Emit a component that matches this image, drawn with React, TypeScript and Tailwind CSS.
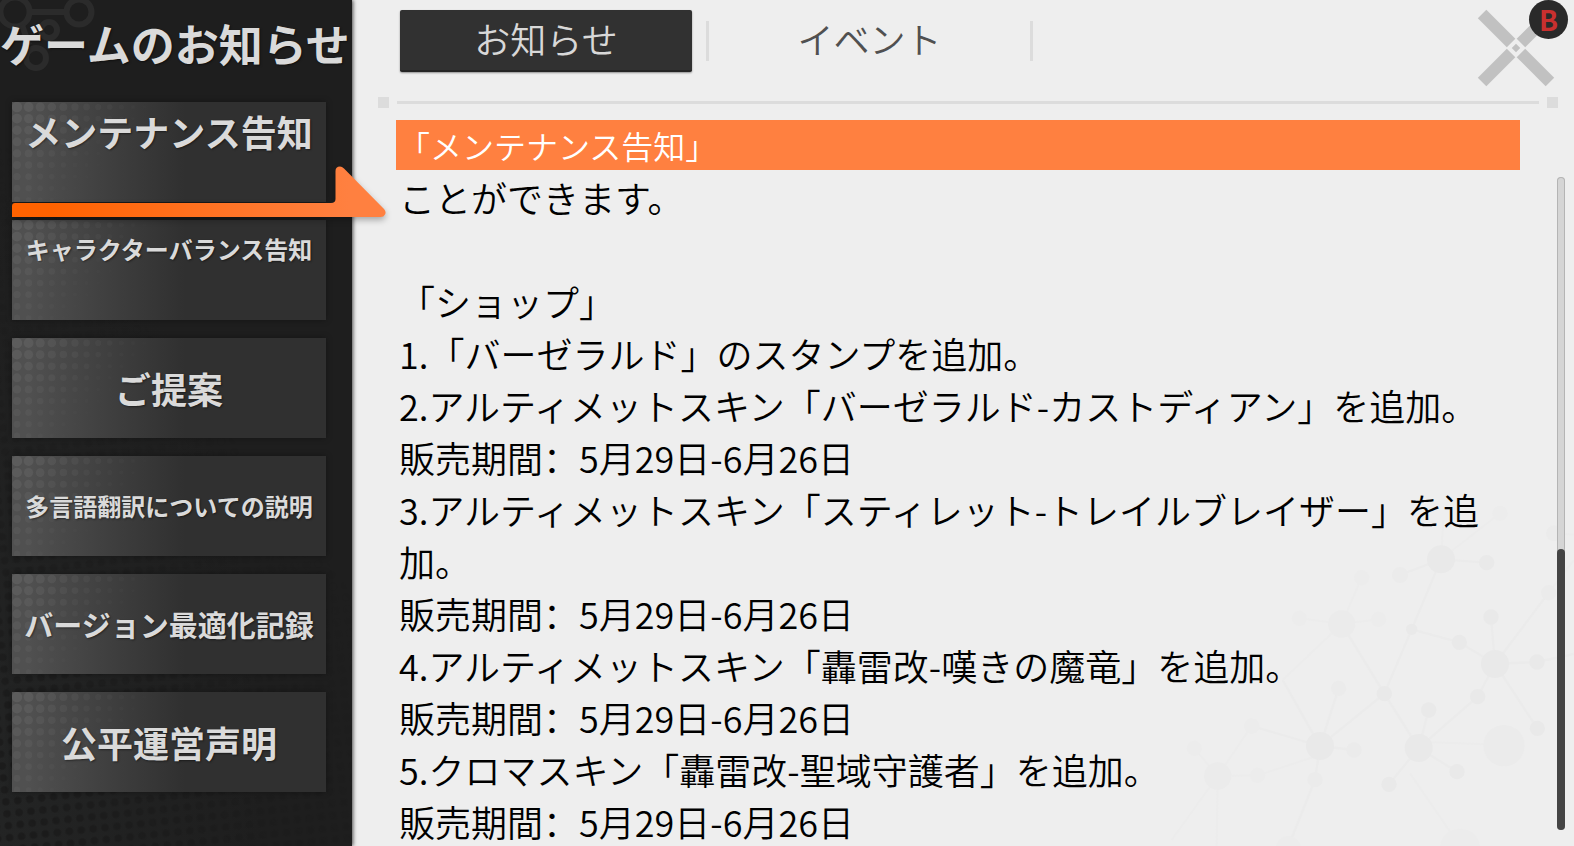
import React from "react";

type MenuItem = { label: string; size: string; raised?: boolean; active?: boolean };

const MENU: MenuItem[] = [
  { label: "メンテナンス告知", size: "text-[36px]", raised: true, active: true },
  { label: "キャラクターバランス告知", size: "text-[24px]", raised: true },
  { label: "ご提案", size: "text-[36px]" },
  { label: "多言語翻訳についての説明", size: "text-[24px]" },
  { label: "バージョン最適化記録", size: "text-[29px]" },
  { label: "公平運営声明", size: "text-[36px]" },
];

const LINES = [
  "ことができます。",
  "",
  "「ショップ」",
  "1.「バーゼラルド」のスタンプを追加。",
  "2.アルティメットスキン「バーゼラルド-カストディアン」を追加。",
  "販売期間：5月29日-6月26日",
  "3.アルティメットスキン「スティレット-トレイルブレイザー」を追加。",
  "販売期間：5月29日-6月26日",
  "4.アルティメットスキン「轟雷改-嘆きの魔竜」を追加。",
  "販売期間：5月29日-6月26日",
  "5.クロマスキン「轟雷改-聖域守護者」を追加。",
  "販売期間：5月29日-6月26日",
];

function ButtonDots() {
  const dots: React.ReactNode[] = [];
  for (let row = 0; row < 9; row++) {
    for (let col = 0; col < 12; col++) {
      const r = 5.2 - col * 0.3 - row * 0.25;
      const opacity = 0.07 - col * 0.0055 - row * 0.005;
      if (r > 0.6 && opacity > 0) {
        dots.push(
          <circle key={`${row}-${col}`} cx={5 + col * 11.6} cy={5 + row * 11.6} r={r} fill="#fff" opacity={opacity} />,
        );
      }
    }
  }
  return (
    <svg className="absolute left-0 top-0 h-full w-[140px]" viewBox="0 0 140 100" aria-hidden="true">
      {dots}
    </svg>
  );
}

function ActiveArrow() {
  return (
    <svg
      className="pointer-events-none absolute left-0 top-[62px] z-20 h-[60px] w-[380px] drop-shadow-[0_3px_3px_rgba(0,0,0,0.3)]"
      viewBox="0 0 380 60"
      aria-hidden="true"
    >
      <defs>
        <linearGradient id="arrow" x1="0" x2="1" y1="0" y2="0">
          <stop offset="0.1" stopColor="#ff6200" />
          <stop offset="0.9" stopColor="#ff8040" />
        </linearGradient>
      </defs>
      <path
        d="M3 39H319Q323.500 39 323.500 35V7Q323.500 2.500 328 2.500Q330 2.500 332 4.500L372 45Q374.500 48 373 50.500Q371.800 53 368.500 53H0V42Q0 39 3 39Z"
        fill="url(#arrow)"
      />
    </svg>
  );
}

function SidebarArt() {
  return (
    <svg className="absolute inset-0 h-full w-full" aria-hidden="true">
      <defs>
        <pattern id="halftone" width="12" height="12" patternUnits="userSpaceOnUse" patternTransform="rotate(-6)">
          <circle cx="6" cy="6" r="3.800" fill="#1b1b1b" />
        </pattern>
        <radialGradient id="haze" cx="0" cy="0.97" r="0.75">
          <stop offset="0" stopColor="#232424" />
          <stop offset="1" stopColor="#1e1e1e" />
        </radialGradient>
        <linearGradient id="fadeUp" x1="0" x2="0.35" y1="1" y2="0.35">
          <stop offset="0" stopColor="#fff" />
          <stop offset="1" stopColor="#000" />
        </linearGradient>
        <mask id="fade">
          <rect width="100%" height="100%" fill="url(#fadeUp)" />
        </mask>
      </defs>
      <rect width="100%" height="100%" fill="url(#haze)" />
      <rect width="100%" height="100%" fill="url(#halftone)" mask="url(#fade)" />
      <g fill="none" stroke="#2b2b2b" strokeWidth="6">
        <circle cx="15" cy="12" r="14.500" />
        <circle cx="79" cy="12" r="12.500" />
        <path d="M29 12H67M22 25L29 45" />
        <circle cx="49" cy="30" r="8" />
        <circle cx="36" cy="58" r="10" />
      </g>
    </svg>
  );
}

function NetworkArt() {
  return (
    <svg
      className="pointer-events-none absolute bottom-0 right-0 h-[346px] w-[424px] overflow-visible"
      viewBox="0 0 1272 1038"
      aria-hidden="true"
    >
      <g stroke="#ebebeb" strokeWidth="7" fill="none">
        <path d="M873 178L750 225M873 178L1010 188M873 178L785 388L703 581L510 738L305 678" />
        <path d="M575 372L703 581L806 744L836 630M398 540L510 738L566 565M510 738L612 750" />
        <path d="M785 388L928 427L1035 492L1023 351M1035 492L1196 278M1035 492L1161 486L1272 462M1035 492L1162 685M1035 492L983 590L806 744L717 853M806 744L921 815" />
        <path d="M510 738L495 839L415 1040" />
      </g>
      <g stroke="#ececec" strokeWidth="6" fill="none">
        <path d="M873 178L1050 40M873 178L880 60M635 233L575 372L450 355M575 372L686 358M575 372L398 540M1196 278L1272 180M806 725L1062 735" />
        <path d="M305 678L203 828M133 745L203 828L323 826L510 765M203 828L65 1020M203 828L200 1038M780 820L930 1038M1212 100L1272 104" />
      </g>
      <g fill="#e9e9e9">
        <circle cx="873" cy="178" r="42" />
        <circle cx="1035" cy="492" r="42" />
        <circle cx="806" cy="744" r="42" />
        <circle cx="510" cy="738" r="42" />
        <circle cx="1010" cy="188" r="23" />
        <circle cx="1023" cy="351" r="23" />
        <circle cx="1161" cy="486" r="23" />
        <circle cx="928" cy="427" r="23" />
        <circle cx="983" cy="590" r="23" />
        <circle cx="1162" cy="685" r="23" />
        <circle cx="785" cy="388" r="17" />
        <circle cx="703" cy="581" r="23" />
        <circle cx="836" cy="630" r="23" />
        <circle cx="717" cy="853" r="23" />
        <circle cx="921" cy="815" r="23" />
      </g>
      <g fill="#ebebeb">
        <circle cx="575" cy="372" r="41" />
        <circle cx="203" cy="828" r="41" />
        <circle cx="750" cy="225" r="24" />
        <circle cx="1196" cy="278" r="23" />
        <circle cx="1212" cy="100" r="24" />
        <circle cx="566" cy="565" r="23" />
        <circle cx="612" cy="750" r="23" />
        <circle cx="495" cy="839" r="23" />
        <circle cx="1062" cy="737" r="62" />
      </g>
      <g fill="#ececec">
        <circle cx="1050" cy="40" r="23" />
        <circle cx="635" cy="233" r="23" />
        <circle cx="448" cy="355" r="23" />
        <circle cx="686" cy="358" r="23" />
        <circle cx="305" cy="678" r="23" />
        <circle cx="133" cy="745" r="23" />
        <circle cx="323" cy="826" r="23" />
        <circle cx="930" cy="1046" r="60" />
        <circle cx="415" cy="1046" r="38" />
      </g>
    </svg>
  );
}

function CloseIcon() {
  return (
    <svg className="h-full w-full" viewBox="0 0 78 78" aria-hidden="true">
      <g transform="rotate(45 39 39)" fill="#c1c1c1">
        <rect x="-9" y="33" width="41" height="12" />
        <rect x="46" y="33" width="41" height="12" />
        <rect x="33" y="-9" width="12" height="41" />
        <rect x="33" y="46" width="12" height="41" />
        <rect x="36" y="36" width="6" height="6" />
      </g>
    </svg>
  );
}

export default function App() {
  return (
    <div className="flex h-screen overflow-hidden bg-[#eeeeee] font-['Noto_Sans_CJK_JP',sans-serif]">
      <aside className="relative z-10 flex w-[352px] shrink-0 flex-col bg-[#1e1e1e] shadow-[1px_0_4px_rgba(0,0,0,0.7)]">
        <SidebarArt />
        <h1 className="relative h-[102px] whitespace-nowrap pt-[11px] text-[44px] font-bold leading-[64px] text-[#dadada] [text-shadow:1px_1px_2px_rgba(0,0,0,0.5)]">
          ゲームのお知らせ
        </h1>
        <nav className="relative flex flex-col gap-[18px] pl-3 pr-[26px]">
          {MENU.map((item) => (
            <div key={item.label} className="relative">
              <button
                type="button"
                aria-current={item.active ? "page" : undefined}
                className={`relative flex h-[100px] w-full items-center justify-center whitespace-nowrap bg-linear-to-r from-[#505050] from-5% to-[#303030] to-55% font-bold leading-[52px] text-[#dadada] shadow-[0_0_6px_rgba(0,0,0,0.35)] [text-shadow:1px_1px_2px_rgba(0,0,0,0.45)] ${item.size} ${item.raised ? "pb-[42px]" : ""}`}
              >
                <ButtonDots />
                <span className="relative">{item.label}</span>
              </button>
              {item.active && <ActiveArrow />}
            </div>
          ))}
        </nav>
      </aside>

      <main className="relative flex min-w-0 flex-1 flex-col">
        <NetworkArt />

        <header className="relative flex h-[97px] items-start pl-12 pr-[19px] pt-[10px]">
          <div role="tablist" className="flex items-center">
            <button
              type="button"
              role="tab"
              aria-selected="true"
              className="h-[62px] w-[292px] rounded-[2px] border-b-2 border-[#252525] bg-[#313131] pb-1 text-[36px] font-[350] leading-[52px] text-[#d8d8d8] shadow-[0_1px_2px_rgba(0,0,0,0.4)]"
            >
              お知らせ
            </button>
            <span className="ml-[14px] h-10 w-[3px] bg-[#dcdcdc]" />
            <button
              type="button"
              role="tab"
              aria-selected="false"
              className="h-[62px] w-[321px] border-b-2 border-transparent pb-1 text-[36px] font-[350] leading-[52px] text-[#505050]"
            >
              イベント
            </button>
            <span className="h-10 w-[3px] bg-[#dcdcdc]" />
          </div>
          <button type="button" aria-label="閉じる" className="relative -mt-px ml-auto size-[78px]">
            <CloseIcon />
            <span className="absolute -right-[13px] -top-[9px] flex size-[39px] items-center justify-center rounded-full bg-[#2a2a2a] text-[28px] font-bold leading-[39px] text-[#c9302f]">
              B
            </span>
          </button>
        </header>

        <div className="relative flex items-center gap-2 pl-[26px] pr-4">
          <span className="size-[11px] bg-[#dcdcdc]" />
          <span className="h-[3px] flex-1 bg-[#dcdcdc]" />
          <span className="size-[11px] bg-[#dcdcdc]" />
        </div>

        <h2 className="relative ml-11 mr-[54px] mt-3 h-[50px] shrink-0 bg-[#ff8040] pl-[2px] text-[32px] font-[350] leading-[50px] text-white">
          「メンテナンス告知」
        </h2>

        <div className="relative flex min-h-0 flex-1 pl-[47px] pr-[9px]">
          <div className="min-w-0 flex-1 overflow-hidden pt-px font-['Noto_Sans_CJK_SC',sans-serif] text-[36px] font-[350] leading-[52px] text-black">
            {LINES.map((line, index) => (
              <p key={index} className="min-h-[52px]">
                {line}
              </p>
            ))}
          </div>
          <div className="mb-4 ml-[38px] mt-[7px] flex w-2 flex-col justify-end rounded-full bg-[#d5d5d5] ring-1 ring-inset ring-[#b4b4b4]">
            <div className="h-[43%] rounded-full bg-[#444444]" />
          </div>
        </div>
      </main>
    </div>
  );
}
